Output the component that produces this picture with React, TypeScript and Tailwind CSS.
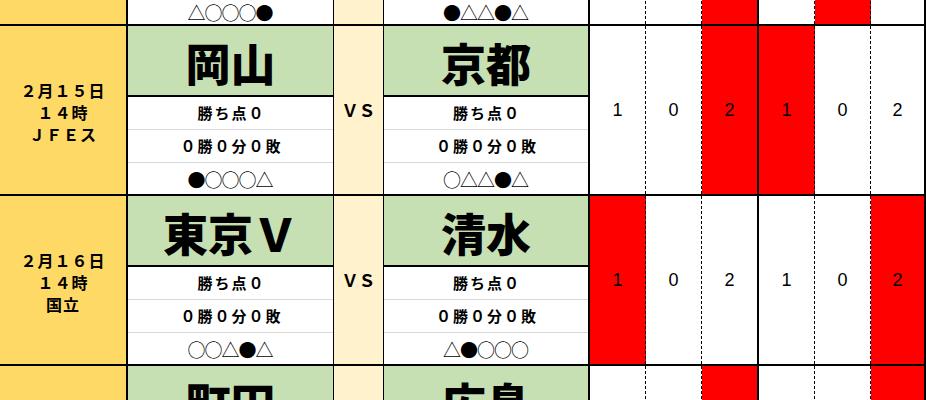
import React from "react";

type Side = { name: string; pts: string; rec: string; form: string };
type Block = { date: string[]; left: Side; right: Side; scores: string[]; red: number[]; formPad?: boolean };

const blank = (form: string, name = ""): Side => ({ name, pts: "", rec: "", form });

const blocks: Block[] = [
  { date: [], left: blank("△○○○●"), right: blank("●△△●△"), scores: ["", "", "", "", "", ""], red: [2, 4], formPad: true },
  {
    date: ["２月１５日", "１４時", "ＪＦＥス"],
    left: { name: "岡山", pts: "勝ち点０", rec: "０勝０分０敗", form: "●○○○△" },
    right: { name: "京都", pts: "勝ち点０", rec: "０勝０分０敗", form: "○△△●△" },
    scores: ["1", "0", "2", "1", "0", "2"],
    red: [2, 3],
  },
  {
    date: ["２月１６日", "１４時", "国立"],
    left: { name: "東京Ｖ", pts: "勝ち点０", rec: "０勝０分０敗", form: "○○△●△" },
    right: { name: "清水", pts: "勝ち点０", rec: "０勝０分０敗", form: "△●○○○" },
    scores: ["1", "0", "2", "1", "0", "2"],
    red: [0, 5],
  },
  { date: [], left: blank("", "町田"), right: blank("", "広島"), scores: ["", "", "", "", "", ""], red: [2, 5] },
];

const colCls = [
  "w-[56px] border-r border-dashed border-black",
  "w-[56px] border-r border-dashed border-black",
  "w-[57px] border-r-2 border-solid border-black",
  "w-[56px] border-r border-dashed border-black",
  "w-[56px] border-r border-dashed border-black",
  "w-[55px] border-r-2 border-solid border-black",
];

function TeamCol({ s, cls, formPad }: { s: Side; cls: string; formPad?: boolean }) {
  return (
    <div className={`flex flex-col ${cls}`}>
      <div className="h-[71px] bg-[#C6E0B4] border-b-2 border-black flex items-center justify-center pt-[3px] text-[45px] font-black leading-none">
        {s.name}
      </div>
      <div className="h-[33px] bg-white border-b border-[#D9D9D9] flex items-center justify-center text-[15px] font-bold tracking-[2px] pl-[2px]">
        {s.pts}
      </div>
      <div className="h-[33px] bg-white border-b border-[#D9D9D9] flex items-center justify-center text-[15px] font-bold tracking-[2px] pl-[2px]">
        {s.rec}
      </div>
      <div
        className={`h-[31px] bg-white flex items-center justify-center text-[18px] tracking-[-1px] leading-none ${
          formPad ? "pt-[6px]" : "pt-0"
        }`}
      >
        <span className="pr-[1px]">{s.form}</span>
      </div>
    </div>
  );
}

function Row({ b }: { b: Block }) {
  return (
    <div className="flex h-[168px] shrink-0">
      <div className="w-[128px] bg-[#FFD966] border-r-2 border-black flex flex-col items-center justify-center text-[16px] font-bold leading-[22px] tracking-[1px] pt-[4px]">
        {b.date.map((d, i) => (
          <div key={i}>{d}</div>
        ))}
      </div>
      <TeamCol s={b.left} cls="w-[206px] border-r border-black" formPad={b.formPad} />
      <div className="w-[50px] bg-[#FFF2CC] border-r border-black flex items-center justify-center text-[17px] font-bold">
        {b.date.length ? "ＶＳ" : ""}
      </div>
      <TeamCol s={b.right} cls="w-[206px] border-r-2 border-black" formPad={b.formPad} />
      {b.scores.map((sc, i) => (
        <div
          key={i}
          className={`${colCls[i]} ${b.red.includes(i) ? "bg-[#FF0000]" : "bg-white"} flex items-center justify-center font-['Liberation_Sans',sans-serif] text-[18px]`}
        >
          {sc}
        </div>
      ))}
    </div>
  );
}

export default function App() {
  return (
    <div className="w-[926px] h-[400px] overflow-hidden bg-white text-black font-['Noto_Sans_CJK_JP',sans-serif]">
      <div className="mt-[-144px] flex flex-col">
        {blocks.map((b, i) => (
          <React.Fragment key={i}>
            {i > 0 && <div className="h-[2px] bg-black shrink-0" />}
            <Row b={b} />
          </React.Fragment>
        ))}
      </div>
    </div>
  );
}
